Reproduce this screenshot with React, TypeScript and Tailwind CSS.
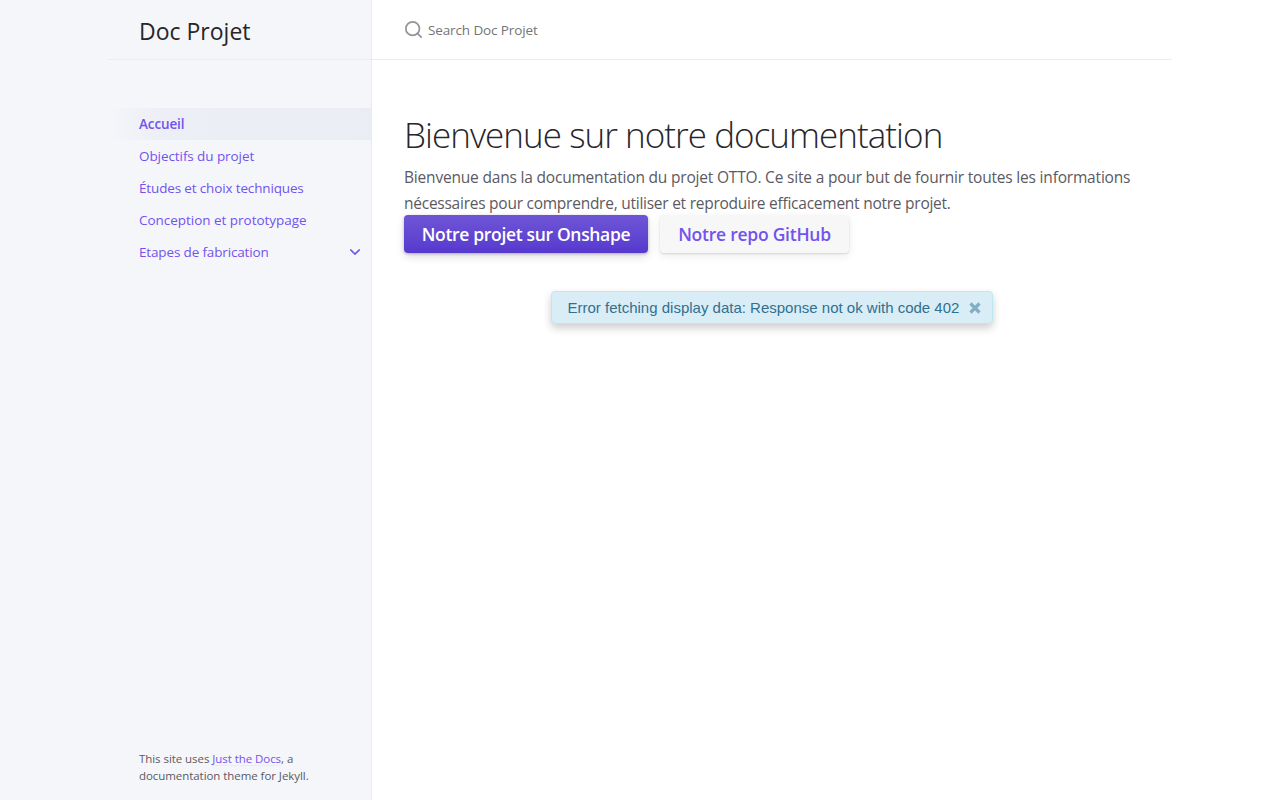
const navItems = [
  { label: "Accueil", active: true, spacing: "tracking-[-0.12px]" },
  { label: "Objectifs du projet", spacing: "tracking-[-0.08px]" },
  { label: "Études et choix techniques", spacing: "tracking-[-0.15px]" },
  { label: "Conception et prototypage", spacing: "tracking-[-0.03px]" },
  { label: "Etapes de fabrication", spacing: "tracking-[-0.15px]", expandable: true },
];

function SearchIcon() {
  return (
    <svg width="17" height="17" viewBox="2 2 20 20" fill="none" stroke="#959396" strokeWidth="2" strokeLinecap="round" strokeLinejoin="round">
      <circle cx="11" cy="11" r="8" />
      <line x1="21" y1="21" x2="16.65" y2="16.65" />
    </svg>
  );
}

function Sidebar() {
  return (
    <aside className="flex w-[372px] shrink-0 flex-col border-r border-[#eeebee] bg-[#f5f6fa] pl-[108px]">
      <div className="flex h-[60px] shrink-0 items-center border-b border-[#eeebee] pl-[31px] pt-0.5">
        <a href="#" className="whitespace-nowrap text-[23px] leading-8 text-[#27262b]">Doc Projet</a>
      </div>

      <nav className="mt-12 flex-1">
        <ul>
          {navItems.map((item) => (
            <li
              key={item.label}
              className={
                item.active
                  ? "flex h-8 items-center bg-[linear-gradient(-90deg,#ebedf5_0%,rgba(235,237,245,0.8)_80%,rgba(235,237,245,0)_100%)] pl-[31px] font-semibold"
                  : "flex h-8 items-center pl-[31px]"
              }
            >
              <a href="#" className={`whitespace-nowrap text-[13.5px] leading-8 text-[#7253ed] ${item.spacing}`}>{item.label}</a>
              {item.expandable && (
                <svg className="ml-auto mr-[10px]" width="12" height="12" viewBox="0 0 12 12" fill="none" stroke="#7253ed" strokeWidth="1.5" strokeLinecap="round" strokeLinejoin="round">
                  <path d="M1.7 3.9 6 8.1l4.3-4.2" />
                </svg>
              )}
            </li>
          ))}
        </ul>
      </nav>

      <footer className="pb-4 pl-[31px] text-[11.5px] leading-[17px] tracking-[-0.06px] text-[#5c5962]">
        <div className="whitespace-nowrap">
          This site uses{" "}
          <a href="#" className="text-[#7253ed] underline decoration-[#eeebee] underline-offset-2">Just the Docs</a>, a
        </div>
        <div className="whitespace-nowrap">documentation theme for Jekyll.</div>
      </footer>
    </aside>
  );
}

function ErrorMessage() {
  return (
    <div className="flex h-[33px] w-[442px] items-center rounded border border-[#bce8f1] bg-[#d9edf7] pl-[15.5px] font-['Liberation_Sans',Arial,sans-serif] text-[15px] text-[#31708f] shadow-[0_4px_8px_rgba(0,0,0,0.2)]">
      <span className="whitespace-nowrap pt-0.5">Error fetching display data: Response not ok with code 402</span>
      <svg className="ml-[10px]" width="12" height="12" viewBox="0 0 12 12" fill="none" stroke="#83aec3" strokeWidth="3.2">
        <path d="M1.5 1.5l9 9M10.5 1.5l-9 9" />
      </svg>
    </div>
  );
}

export default function App() {
  return (
    <div className="flex h-screen overflow-hidden bg-white font-['Open_Sans','Noto_Sans',sans-serif]">
      <Sidebar />

      <div className="w-[800px]">
        <header className="flex h-[60px] items-center gap-[6px] border-b border-[#eeebee] pl-[33px]">
          <SearchIcon />
          <span className="pt-0.5 text-[13.5px] tracking-[-0.12px] text-[#757575]">Search Doc Projet</span>
        </header>

        <main className="w-[768px] pl-8 pt-[52px]">
          <h1 className="whitespace-nowrap text-[35px] font-light leading-[45px] tracking-[-0.95px] text-[#27262b]">
            Bienvenue sur notre documentation
          </h1>
          <p className="mt-[7px] text-[15.5px] leading-[26px] text-[#5c5962]">
            <span className="block whitespace-nowrap tracking-[-0.19px]">
              Bienvenue dans la documentation du projet OTTO. Ce site a pour but de fournir toutes les informations
            </span>
            <span className="block whitespace-nowrap tracking-[-0.25px]">
              nécessaires pour comprendre, utiliser et reproduire efficacement notre projet.
            </span>
          </p>

          <div className="-mt-px flex gap-3 text-[17.5px] font-semibold leading-[38px]">
            <a
              href="#"
              className="flex h-[38px] w-[244px] justify-center whitespace-nowrap rounded bg-linear-to-b from-[#6f55d5] to-[#5739ce] tracking-[-0.33px] text-white shadow-[0_1px_3px_rgba(0,0,0,0.25),0_4px_10px_rgba(0,0,0,0.12)]"
            >
              Notre projet sur Onshape
            </a>
            <a
              href="#"
              className="flex h-[38px] w-[189px] justify-center whitespace-nowrap rounded bg-[#f7f7f7] tracking-[-0.25px] text-[#7253ed] shadow-[0_1px_2px_rgba(0,0,0,0.12),0_3px_10px_rgba(0,0,0,0.08)]"
            >
              Notre repo GitHub
            </a>
          </div>

          <div className="mt-[38px] flex justify-center">
            <ErrorMessage />
          </div>
        </main>
      </div>
    </div>
  );
}
